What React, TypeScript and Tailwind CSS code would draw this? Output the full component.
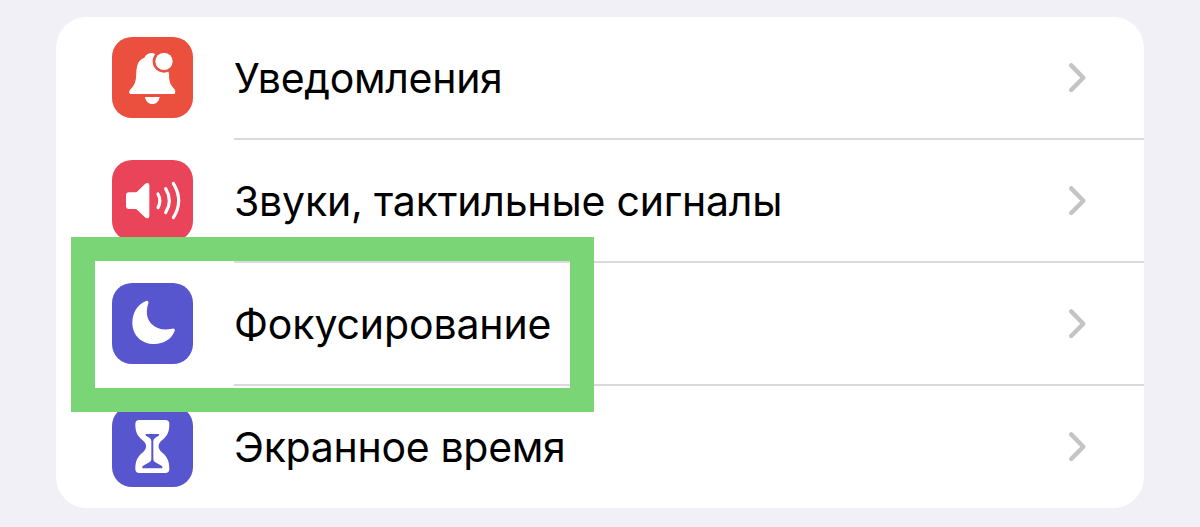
import type { ReactNode } from "react";

const BellIcon = () => (
  <svg viewBox="0 0 243 243" className="size-full">
    <path
      fill="#fff"
      d="M57 171C51 171 50 164 54 159C63 149 70 140 72 122C73 104 73 89 79 77C83 69 90 65 97 62C101 53 109 48 121 48L156 60L171 110C171 125 172 138 181 149C187 155 190 159 190 164C190 168 188 171 183 171Z"
    />
    <path fill="#fff" d="M99 180H143C141 193 133 201 121 201S101 193 99 180Z" />
    <circle cx="156" cy="73" r="34" fill="#eb4f3d" />
    <circle cx="156" cy="73" r="26" fill="#fff" />
  </svg>
);

const SoundIcon = () => (
  <svg viewBox="0 0 243 243" className="size-full">
    <path
      fill="#fff"
      d="M51 97H70Q73 97 75 95L99 72Q103 69 106 69Q112 69 112 76V167Q112 175 105 175Q102 175 99 172L75 149Q73 147 70 147H51Q42 147 42 138V106Q42 97 51 97Z"
    />
    <g fill="none" stroke="#fff" strokeWidth="9.5" strokeLinecap="round">
      <path d="M138 102Q149 122 138 143" />
      <path d="M161 86Q183 122 161 158" />
      <path d="M184 70Q216 122 184 173" />
    </g>
  </svg>
);

const MoonIcon = () => (
  <svg viewBox="0 0 243 243" className="size-full">
    <path
      fill="#fff"
      d="M102 54C107 52 111 56 109 61C101 85 104 108 118 122C133 138 156 143 180 137C186 135 190 139 188 144C179 168 155 183 127 183C88 183 61 156 61 119C61 90 76 64 102 54Z"
    />
  </svg>
);

const HourglassIcon = () => (
  <svg viewBox="0 0 243 243" className="size-full">
    <path
      fill="#fff"
      d="M82 42H160Q172 42 172 54C172 79 166 89 151 102C136 114 136 128 151 140C166 153 172 164 172 189Q172 201 160 201H82Q70 201 70 189C70 164 76 153 91 140C106 128 106 114 91 102C76 89 70 79 70 54Q70 42 82 42Z"
    />
    <path
      fill="#5856ce"
      d="M102 84H140Q144 85 140 89L130 95Q124 99 124 105V160Q124 166 130 169L146 178Q154 183 150 187H92Q88 183 96 178L112 169Q118 166 118 160V105Q118 99 112 95L102 89Q98 85 102 84Z"
    />
  </svg>
);

const Chevron = () => (
  <svg viewBox="0 0 20 32" className="h-8 w-5 shrink-0">
    <path
      d="M3.2 3.4L15.3 15.7L3.2 28"
      fill="none"
      stroke="#c4c4c6"
      strokeWidth="4.4"
      strokeLinecap="round"
      strokeLinejoin="round"
    />
  </svg>
);

type RowProps = {
  icon: ReactNode;
  color: string;
  label: string;
  tracking: string;
  last?: boolean;
};

const Row = ({ icon, color, label, tracking, last }: RowProps) => (
  <li className="flex h-[123px] pl-14">
    <div className={`mt-5 size-[81px] shrink-0 overflow-hidden rounded-[20px] ${color}`}>
      {icon}
    </div>
    <div
      className={`ml-[41px] flex flex-1 items-center justify-between border-b-2 pr-[56px] ${
        last ? "border-transparent" : "border-[#dadadc]"
      }`}
    >
      <span className={`pt-px text-[41px] leading-none whitespace-nowrap ${tracking}`}>
        {label}
      </span>
      <Chevron />
    </div>
  </li>
);

export default function App() {
  return (
    <main className="h-[527px] overflow-hidden bg-[#f1f0f6] px-14 pt-[17px] font-[Inter,'Liberation_Sans',sans-serif] text-black">
      <div className="relative">
        <ul className="h-[491px] overflow-hidden rounded-[31px] bg-white">
          <Row
            icon={<BellIcon />}
            color="bg-[#eb4f3d]"
            label="Уведомления"
            tracking="tracking-[-0.3px]"
          />
          <Row
            icon={<SoundIcon />}
            color="bg-[#ea445a]"
            label="Звуки, тактильные сигналы"
            tracking="tracking-[-0.2px]"
          />
          <Row
            icon={<MoonIcon />}
            color="bg-[#5856ce]"
            label="Фокусирование"
            tracking="tracking-[-0.12px]"
          />
          <Row
            icon={<HourglassIcon />}
            color="bg-[#5856ce]"
            label="Экранное время"
            tracking="tracking-[-0.3px]"
            last
          />
        </ul>
        <div className="pointer-events-none absolute top-[220px] left-[15px] h-[175px] w-[523px] border-[24px] border-[#7ad576]" />
      </div>
    </main>
  );
}
